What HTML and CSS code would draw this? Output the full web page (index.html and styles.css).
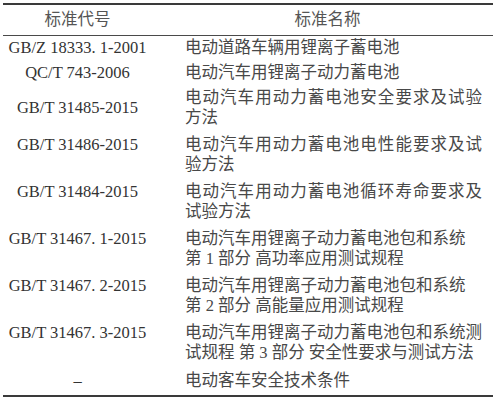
FILE: index.html
```html
<!DOCTYPE html>
<html lang="zh">
<head>
<meta charset="utf-8">
<link rel="stylesheet" href="styles.css">
</head>
<body>
<div class="table">
  <div class="row head">
    <div class="code">标准代号</div>
    <div class="name center">标准名称</div>
  </div>
  <div class="row single first">
    <div class="code">GB/Z 18333. 1-2001</div>
    <div class="name">电动道路车辆用锂离子蓄电池</div>
  </div>
  <div class="row single">
    <div class="code">QC/T 743-2006</div>
    <div class="name">电动汽车用锂离子动力蓄电池</div>
  </div>
  <div class="row double r3">
    <div class="code mid">GB/T 31485-2015</div>
    <div class="name"><span class="jl">电动汽车用动力蓄电池安全要求及试验</span><span class="ln">方法</span></div>
  </div>
  <div class="row double">
    <div class="code">GB/T 31486-2015</div>
    <div class="name"><span class="jl">电动汽车用动力蓄电池电性能要求及试</span><span class="ln">验方法</span></div>
  </div>
  <div class="row double">
    <div class="code">GB/T 31484-2015</div>
    <div class="name"><span class="jl">电动汽车用动力蓄电池循环寿命要求及</span><span class="ln">试验方法</span></div>
  </div>
  <div class="row double">
    <div class="code">GB/T 31467. 1-2015</div>
    <div class="name"><span class="ln">电动汽车用锂离子动力蓄电池包和系统</span><span class="ln">第 1 部分 高功率应用测试规程</span></div>
  </div>
  <div class="row double">
    <div class="code">GB/T 31467. 2-2015</div>
    <div class="name"><span class="ln">电动汽车用锂离子动力蓄电池包和系统</span><span class="ln">第 2 部分 高能量应用测试规程</span></div>
  </div>
  <div class="row double">
    <div class="code">GB/T 31467. 3-2015</div>
    <div class="name"><span class="jl">电动汽车用锂离子动力蓄电池包和系统测</span><span class="ln">试规程 第 3 部分 安全性要求与测试方法</span></div>
  </div>
  <div class="row last">
    <div class="code">–</div>
    <div class="name">电动客车安全技术条件</div>
  </div>
</div>
</body>
</html>
```
FILE: styles.css
```css
html, body {
  margin: 0;
  padding: 0;
  background: #ffffff;
}

body {
  font-family: "Liberation Serif", "Noto Sans CJK SC", serif;
  font-size: 16.5px;
  line-height: 20px;
  color: #333333;
}

.table {
  margin: 3px 0 0 3px;
  width: 490px;
  border-top: 2px solid #3a3a3a;
  border-bottom: 2px solid #3a3a3a;
}

.row {
  display: grid;
  grid-template-columns: 149px 1fr;
}

.code {
  text-align: center;
  white-space: nowrap;
  align-self: start;
}

.code.mid {
  align-self: center;
}

.name {
  padding: 0 11px 0 33px;
  color: #484848;
}

.name.center {
  text-align: center;
  padding: 0 0 0 10px;
}

.head {
  padding: 5px 0 5px;
  border-bottom: 1px solid #4a4a4a;
  color: #555555;
}

.head .name {
  color: #555555;
}

.single {
  padding: 2px 0 3px;
}

.double {
  padding: 4px 0 3px;
}

.double.r3 {
  padding-top: 2px;
}

.last {
  padding: 5px 0 4px;
}

.jl {
  display: block;
  white-space: nowrap;
  text-align: justify;
  text-align-last: justify;
}

.ln {
  display: block;
  white-space: nowrap;
}
```
